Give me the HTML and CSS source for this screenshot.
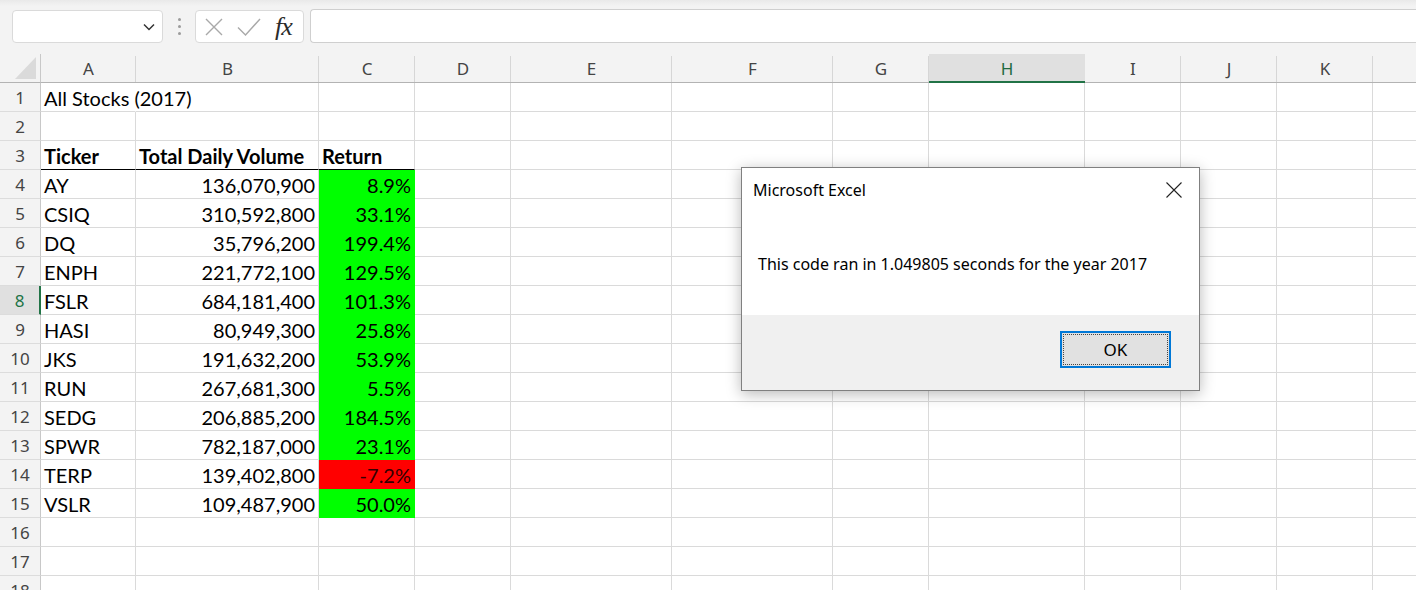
FILE: index.html
```html
<!DOCTYPE html>
<html>
<head>
<meta charset="utf-8">
<title>Excel</title>
<link rel="stylesheet" href="styles.css">
</head>
<body>
<div class="fbar">
  <div class="namebox">
    <svg width="12" height="8" viewBox="0 0 12 8"><polyline points="1,1.5 6,6.5 11,1.5" fill="none" stroke="#333" stroke-width="1.5"/></svg>
  </div>
  <div class="dots"><i></i><i></i><i></i></div>
  <div class="fxbox">
    <svg width="18" height="18" viewBox="0 0 18 18"><path d="M1 1 L17 17 M17 1 L1 17" stroke="#a9a9a9" stroke-width="1.4" fill="none"/></svg>
    <svg width="24" height="18" viewBox="0 0 24 18"><polyline points="1,9.5 8.5,17 23,1" stroke="#a9a9a9" stroke-width="1.4" fill="none"/></svg>
    <span class="fx">fx</span>
  </div>
  <div class="finput"></div>
</div>

<div class="sheet">
  <div class="corner"><svg width="21" height="22" viewBox="0 0 21 22"><polygon points="0,22 21,22 21,0" fill="#dadada"/></svg></div>
  <div class="ch">A</div><div class="ch">B</div><div class="ch">C</div><div class="ch">D</div><div class="ch">E</div><div class="ch">F</div><div class="ch">G</div><div class="ch sel">H</div><div class="ch">I</div><div class="ch">J</div><div class="ch">K</div><div class="ch"></div>

  <div class="rh">1</div><div class="ov">All Stocks (2017)</div><div></div><div></div><div></div><div></div><div></div><div></div><div></div><div></div><div></div><div></div><div></div>
  <div class="rh">2</div><div></div><div></div><div></div><div></div><div></div><div></div><div></div><div></div><div></div><div></div><div></div><div></div>
  <div class="rh">3</div><div class="hd">Ticker</div><div class="hd">Total Daily Volume</div><div class="hd">Return</div><div></div><div></div><div></div><div></div><div></div><div></div><div></div><div></div><div></div>
  <div class="rh">4</div><div>AY</div><div class="n">136,070,900</div><div class="n g">8.9%</div><div></div><div></div><div></div><div></div><div></div><div></div><div></div><div></div><div></div>
  <div class="rh">5</div><div>CSIQ</div><div class="n">310,592,800</div><div class="n g">33.1%</div><div></div><div></div><div></div><div></div><div></div><div></div><div></div><div></div><div></div>
  <div class="rh">6</div><div>DQ</div><div class="n">35,796,200</div><div class="n g">199.4%</div><div></div><div></div><div></div><div></div><div></div><div></div><div></div><div></div><div></div>
  <div class="rh">7</div><div>ENPH</div><div class="n">221,772,100</div><div class="n g">129.5%</div><div></div><div></div><div></div><div></div><div></div><div></div><div></div><div></div><div></div>
  <div class="rh rsel">8</div><div>FSLR</div><div class="n">684,181,400</div><div class="n g">101.3%</div><div></div><div></div><div></div><div></div><div></div><div></div><div></div><div></div><div></div>
  <div class="rh">9</div><div>HASI</div><div class="n">80,949,300</div><div class="n g">25.8%</div><div></div><div></div><div></div><div></div><div></div><div></div><div></div><div></div><div></div>
  <div class="rh">10</div><div>JKS</div><div class="n">191,632,200</div><div class="n g">53.9%</div><div></div><div></div><div></div><div></div><div></div><div></div><div></div><div></div><div></div>
  <div class="rh">11</div><div>RUN</div><div class="n">267,681,300</div><div class="n g">5.5%</div><div></div><div></div><div></div><div></div><div></div><div></div><div></div><div></div><div></div>
  <div class="rh">12</div><div>SEDG</div><div class="n">206,885,200</div><div class="n g">184.5%</div><div></div><div></div><div></div><div></div><div></div><div></div><div></div><div></div><div></div>
  <div class="rh">13</div><div>SPWR</div><div class="n">782,187,000</div><div class="n g">23.1%</div><div></div><div></div><div></div><div></div><div></div><div></div><div></div><div></div><div></div>
  <div class="rh">14</div><div>TERP</div><div class="n">139,402,800</div><div class="n r">-7.2%</div><div></div><div></div><div></div><div></div><div></div><div></div><div></div><div></div><div></div>
  <div class="rh">15</div><div>VSLR</div><div class="n">109,487,900</div><div class="n g">50.0%</div><div></div><div></div><div></div><div></div><div></div><div></div><div></div><div></div><div></div>
  <div class="rh">16</div><div></div><div></div><div></div><div></div><div></div><div></div><div></div><div></div><div></div><div></div><div></div><div></div>
  <div class="rh">17</div><div></div><div></div><div></div><div></div><div></div><div></div><div></div><div></div><div></div><div></div><div></div><div></div>
  <div class="rh">18</div><div></div><div></div><div></div><div></div><div></div><div></div><div></div><div></div><div></div><div></div><div></div><div></div>
</div>

<div class="dialog">
  <div class="dlg-main">
    <div class="dlg-title">
      <span>Microsoft Excel</span>
      <svg width="16" height="16" viewBox="0 0 16 16"><path d="M0.5 0.5 L15.5 15.5 M15.5 0.5 L0.5 15.5" stroke="#222" stroke-width="1.1" fill="none"/></svg>
    </div>
    <div class="dlg-msg">This code ran in 1.049805 seconds for the year 2017</div>
  </div>
  <div class="dlg-foot">
    <div class="ok">OK</div>
  </div>
</div>
</body>
</html>
```

FILE: styles.css
```css
* { box-sizing: border-box; }

body {
  margin: 0;
  width: 1416px;
  height: 590px;
  overflow: hidden;
  position: relative;
  background: linear-gradient(#e9e9e9, #f3f3f3 6px) #f3f3f3;
  font-family: "Noto Sans", "Open Sans", sans-serif;
}

/* formula bar */
.fbar {
  display: flex;
  height: 43px;
  padding: 9px 0 0 12px;
}
.namebox {
  width: 151px;
  margin-top: 1px;
  background: #fff;
  border: 1px solid #dadada;
  border-radius: 4px;
  display: flex;
  align-items: center;
  justify-content: flex-end;
  padding-right: 7px;
}
.dots {
  width: 32px;
  display: flex;
  flex-direction: column;
  align-items: center;
  justify-content: center;
  gap: 4px;
}
.dots i {
  width: 3px;
  height: 3px;
  border-radius: 50%;
  background: #9c9c9c;
}
.fxbox {
  width: 109px;
  margin-top: 1px;
  background: #fff;
  border: 1px solid #dadada;
  border-radius: 4px;
  display: flex;
  align-items: center;
  padding-left: 9px;
  gap: 14px;
}
.fx {
  font-family: "Liberation Serif", serif;
  font-style: italic;
  font-size: 26px;
  line-height: 30px;
  color: #2b2b2b;
  letter-spacing: -1px;
}
.finput {
  flex: 1;
  margin-left: 6px;
  background: #fff;
  border: 1px solid #cfcfcf;
  border-right: none;
  border-radius: 4px 0 0 4px;
}

/* sheet grid */
.sheet {
  margin-top: 11px;
  width: 1469px;
  display: grid;
  grid-template-columns: 41px 95px 183px 96px 96px 161px 161px 96px 156px 96px 96px 96px 96px;
  grid-auto-rows: 29px;
  background: #fff;
  font-family: "Lato", "Carlito", sans-serif;
  font-size: 20px;
  color: #000;
}
.sheet > div {
  border-right: 1px solid #dadada;
  border-bottom: 1px solid #dadada;
  padding: 0 3px 1px 3px;
  display: flex;
  align-items: flex-end;
  line-height: 24px;
  white-space: nowrap;
}
.sheet > .ov { overflow: visible; border-right-color: transparent; }
.sheet > .hd { font-weight: bold; border-bottom-color: #000; }
.sheet > .n { justify-content: flex-end; }
.sheet > .g { background: #00ff00; border-color: #00ff00; }
.sheet > .r { background: #ff0000; border-color: #ff0000; color: #300; }

.sheet > .corner {
  background: #f3f3f3;
  border-right: 1px solid #c8c8c8;
  border-bottom: 1px solid #b3b3b3;
  justify-content: flex-end;
  padding: 0 4px 3px 0;
}
.sheet > .ch {
  background: linear-gradient(#d6d6d6, #d6d6d6) right bottom / 1px 26px no-repeat, #f3f3f3;
  border-right: none;
  border-bottom: 1px solid #b3b3b3;
  justify-content: center;
  font-family: "Noto Sans", sans-serif;
  font-size: 17px;
  color: #444;
  padding: 0 0 1px;
}
.sheet > .ch.sel {
  background: #e0e0e0;
  border-bottom: 2px solid #217346;
  color: #1e6b41;
  padding-bottom: 0;
}
.sheet > .rh {
  background: #f3f3f3;
  border-right: 1px solid #c8c8c8;
  border-bottom: 1px solid #dcdcdc;
  justify-content: center;
  font-family: "Noto Sans", sans-serif;
  font-size: 17px;
  color: #444;
  padding: 0 0 1px;
}
.sheet > .rh.rsel {
  background: #e0e0e0;
  border-right: 2px solid #217346;
  color: #217346;
}

/* dialog */
.dialog {
  position: absolute;
  left: 741px;
  top: 167px;
  width: 459px;
  height: 224px;
  border: 1px solid #808080;
  background: #f0f0f0;
  box-shadow: 0 3px 14px rgba(0, 0, 0, 0.28);
  display: flex;
  flex-direction: column;
  font-family: "Noto Sans", sans-serif;
  color: #000;
}
.dlg-main {
  background: #fff;
  height: 147px;
}
.dlg-title {
  display: flex;
  justify-content: space-between;
  align-items: center;
  padding: 11px 17px 0 11px;
  font-size: 16px;
  line-height: 22px;
}
.dlg-msg {
  padding: 52px 0 0 16px;
  font-size: 16px;
  line-height: 22px;
}
.dlg-foot {
  flex: 1;
  display: flex;
  justify-content: flex-end;
  align-items: flex-start;
  padding: 16px 28px 0 0;
}
.ok {
  position: relative;
  width: 111px;
  height: 37px;
  border: 2px solid #0078d7;
  background: #e1e1e1;
  display: flex;
  align-items: center;
  justify-content: center;
  font-size: 17px;
}
.ok::after {
  content: "";
  position: absolute;
  inset: 1px;
  border: 1px dotted #444;
}
```
